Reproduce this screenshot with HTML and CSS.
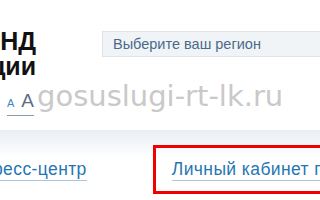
FILE: index.html
```html
<!DOCTYPE html>
<html lang="ru">
<head>
<meta charset="utf-8">
<link rel="stylesheet" href="styles.css">
</head>
<body>
<div class="page">
  <header class="header">
    <div class="brand">
      <div class="brand-name">
        <span>ФОНД</span>
        <span>информации</span>
      </div>
      <div class="font-switch">
        <span class="fs-small">A</span>
        <span class="fs-large">A</span>
      </div>
    </div>
    <div class="region">Выберите ваш регион</div>
  </header>
  <nav class="nav">
    <div class="nav-item"><a class="nav-link" href="#">Пресс-центр</a></div>
    <div class="nav-item nav-item-marked"><a class="nav-link" href="#">Личный кабинет правообладателя</a></div>
  </nav>
  <div class="watermark">gosuslugi-rt-lk.ru</div>
</div>
</body>
</html>
```
FILE: styles.css
```css
html, body {
  margin: 0;
  padding: 0;
  background: #fff;
}
body {
  width: 320px;
  height: 200px;
  overflow: hidden;
  font-family: "Liberation Sans", Arial, sans-serif;
}
.page {
  position: relative;
  width: 320px;
  height: 200px;
  overflow: hidden;
}
.header {
  display: flex;
  height: 130px;
}
.brand {
  width: 36px;
  flex: none;
  padding-top: 29px;
  display: flex;
  flex-direction: column;
}
.brand-name {
  display: flex;
  flex-direction: column;
  align-items: flex-end;
  font-weight: bold;
  font-size: 25px;
  line-height: 25px;
  color: #111;
  white-space: nowrap;
}
.font-switch {
  display: flex;
  align-items: baseline;
  align-self: flex-start;
  gap: 7px;
  margin: 13px 0 0 7px;
  padding: 0 0 3px 0;
  border-bottom: 1px solid #8d9aa8;
  line-height: 18px;
}
.fs-small {
  font-size: 11px;
  color: #3f86c6;
}
.fs-large {
  font-size: 19px;
  color: #5a6f86;
}
.region {
  flex: none;
  width: 240px;
  height: 24px;
  margin: 31px 0 0 66px;
  padding-left: 10px;
  background: #f1f4f7;
  border: 1px solid #dfe4ea;
  color: #4b6a8a;
  font-size: 14.5px;
  line-height: 24px;
  white-space: nowrap;
}
.nav {
  display: flex;
  align-items: flex-start;
  gap: 47px;
  height: 70px;
  padding-top: 15px;
  box-sizing: border-box;
  margin-left: -39px;
  background: linear-gradient(#eaeef3, #ffffff 28px);
}
.nav-item {
  flex: none;
  height: 43px;
  padding: 0 16px;
  border: 3px solid transparent;
  font-size: 17.5px;
  letter-spacing: 0.4px;
  line-height: 43px;
  white-space: nowrap;
}
.nav-item-marked {
  border-color: #f20000;
}
.nav-link {
  color: #1f77b1;
  text-decoration: none;
  border-bottom: 1px solid #a9c6dc;
  padding-bottom: 1px;
}
.watermark {
  position: absolute;
  left: 37px;
  top: 82px;
  font-family: "DejaVu Sans", sans-serif;
  font-size: 29px;
  line-height: 29px;
  color: #c9c9c9;
  white-space: nowrap;
  pointer-events: none;
}
```
